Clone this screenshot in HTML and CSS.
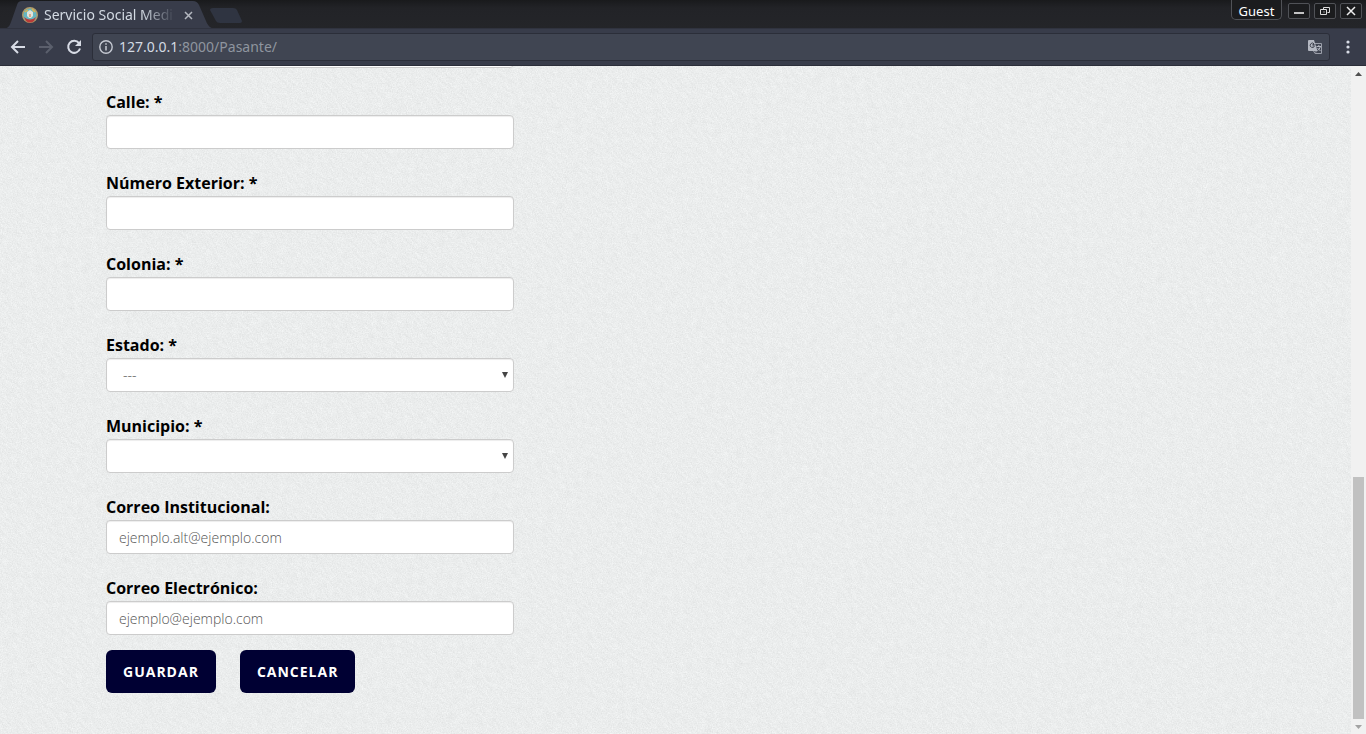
FILE: index.html
```html
<!DOCTYPE html>
<html lang="es">
<head>
<meta charset="utf-8">
<meta name="viewport" content="width=device-width, initial-scale=1">
<title>Servicio Social Medicina</title>
<link rel="stylesheet" href="styles.css">
</head>
<body>
<header class="browser">
  <div class="tabstrip">
    <svg class="tab-shape" width="244" height="28" viewBox="0 0 244 28" aria-hidden="true">
      <path d="M6 28.500C9 27 10 25 11 22L17 5Q18 1 22 1H193Q197 1 199 5L206 21Q208 27 213 28.500Z" fill="#383c4a"/>
      <path d="M213 8H233Q236 8 237 10L242 21Q242 23 240 23H220Q217 23 216 21L210 10Q210 8 213 8Z" fill="#2f3441"/>
    </svg>
    <div class="tab">
      <svg class="favicon" width="16" height="16" viewBox="0 0 16 16" aria-hidden="true">
        <circle cx="8" cy="8" r="7.300" fill="#65b5c0" stroke="#b19a69" stroke-width="1.400"/>
        <path d="M2 10Q8 15 14 10L12 14Q8 17 4 14Z" fill="#b93b38"/>
        <path d="M3 5L6 3M10 2L13 5" stroke="#e0b349" stroke-width="1.500"/>
        <path d="M8 3L11 5V9L9 11H7L5 9V5Z" fill="#dfe3da"/>
        <path d="M8 7V10" stroke="#d9a988" stroke-width="2"/>
      </svg>
      <span class="tab-title">Servicio Social Medi</span>
      <button class="icon-btn" type="button" aria-label="Cerrar pestaña"><svg width="9" height="9" viewBox="0 0 9 9"><path d="M1 1L8 8M8 1L1 8" stroke="#b4b8c0" stroke-width="1.500"/></svg></button>
    </div>
    <div class="window-controls">
      <button class="guest" type="button">Guest</button>
      <button class="win-btn" type="button" aria-label="Minimizar"><svg width="20" height="14" viewBox="0 0 20 14"><path d="M5 9H15" stroke="#eee" stroke-width="1.600"/></svg></button>
      <button class="win-btn" type="button" aria-label="Restaurar"><svg width="20" height="14" viewBox="0 0 20 14"><g fill="none" stroke="#ddd"><path d="M8.500 5.500V3.500H14.500V8.500H12.500"/><path d="M5.500 5.500H11.500V10.500H5.500Z"/><path d="M8 8H10" stroke="#888"/></g></svg></button>
      <button class="win-btn" type="button" aria-label="Cerrar"><svg width="20" height="14" viewBox="0 0 20 14"><path d="M6 3L14 11M14 3L6 11" stroke="#eee" stroke-width="1.500"/></svg></button>
    </div>
  </div>
  <div class="toolbar">
    <nav class="nav">
      <button class="icon-btn" type="button" aria-label="Atrás"><svg width="16" height="16" viewBox="0 0 16 16"><path d="M15 8H2.500M8 2L2 8L8 14" fill="none" stroke="#d8dce6" stroke-width="2"/></svg></button>
      <button class="icon-btn" type="button" aria-label="Adelante"><svg width="16" height="16" viewBox="0 0 16 16"><path d="M1 8H13.500M8 2L14 8L8 14" fill="none" stroke="#5b5f6c" stroke-width="2"/></svg></button>
      <button class="icon-btn" type="button" aria-label="Recargar"><svg width="16" height="16" viewBox="0 0 16 16"><path d="M13 4.200A6 6 0 1 0 14 9.500" fill="none" stroke="#d8dce6" stroke-width="2"/><path d="M15 1V7H9Z" fill="#d8dce6"/></svg></button>
    </nav>
    <div class="address">
      <svg width="14" height="14" viewBox="0 0 14 14" aria-hidden="true"><circle cx="7" cy="7" r="6.200" fill="none" stroke="#c5c9d2" stroke-width="1.400"/><path d="M7 6V10.500M7 3.200V4.800" stroke="#c5c9d2" stroke-width="1.500"/></svg>
      <span class="url"><span class="host">127.0.0.1</span>:8000/Pasante/</span>
      <svg class="translate" width="15" height="15" viewBox="0 0 15 15" aria-hidden="true">
        <path d="M6 3.500H13.500V13.500H7L5 10" fill="none" stroke="#9a9ea9"/>
        <path d="M0 1Q0 0 1 0H6L9.500 11H1Q0 11 0 10Z" fill="#b4b8c2"/>
        <path d="M6.500 4.500H4.500M6 3.800A2.200 2.200 0 1 0 6.500 5.800H4.500" fill="none" stroke="#414551"/>
        <path d="M8.500 6.500H13M10.800 5V6.500M12.500 6.500Q11.500 9.500 9.500 10.500M9.500 8L12.500 11" fill="none" stroke="#b4b8c2"/>
        <path d="M7 11H9.500L7.500 13.500Z" fill="#777c88"/>
      </svg>
    </div>
    <button class="icon-btn" type="button" aria-label="Menú"><svg width="4" height="14" viewBox="0 0 4 14" fill="#d8dce6"><circle cx="2" cy="2" r="1.600"/><circle cx="2" cy="7" r="1.600"/><circle cx="2" cy="12" r="1.600"/></svg></button>
  </div>
</header>
<div class="viewport">
  <main class="page">
    <form class="form">
      <div class="field"><input class="control" type="text" aria-label="Domicilio"></div>
      <div class="field"><label for="calle">Calle: *</label><input class="control" id="calle" type="text"></div>
      <div class="field"><label for="numero">Número Exterior: *</label><input class="control" id="numero" type="text"></div>
      <div class="field"><label for="colonia">Colonia: *</label><input class="control" id="colonia" type="text"></div>
      <div class="field"><label for="estado">Estado: *</label><select class="control select" id="estado"><option>---</option></select></div>
      <div class="field"><label for="municipio">Municipio: *</label><select class="control select" id="municipio"></select></div>
      <div class="field"><label for="institucional">Correo Institucional:</label><input class="control" id="institucional" type="email" placeholder="ejemplo.alt@ejemplo.com"></div>
      <div class="field"><label for="correo">Correo Electrónico:</label><input class="control" id="correo" type="email" placeholder="ejemplo@ejemplo.com"></div>
      <div class="actions">
        <button class="btn" type="submit">GUARDAR</button>
        <button class="btn" type="button">CANCELAR</button>
      </div>
    </form>
  </main>
  <div class="scrollbar" aria-hidden="true">
    <svg width="15" height="16" viewBox="0 0 15 16"><path d="M4 10L7.500 6L11 10Z" fill="#505050"/></svg>
    <div class="track"><div class="thumb"></div></div>
    <svg width="15" height="15" viewBox="0 0 15 15"><path d="M4 6L7.500 10L11 6Z" fill="#a3a3a3"/></svg>
  </div>
</div>
</body>
</html>
```
FILE: styles.css
```css
* { box-sizing: border-box; }

body {
  margin: 0;
  height: 100vh;
  display: flex;
  flex-direction: column;
  overflow: hidden;
  font-family: "Open Sans", sans-serif;
}

button { font-family: inherit; cursor: pointer; }

.browser {
  flex: none;
  font-family: "Noto Sans", sans-serif;
}

.tabstrip {
  position: relative;
  display: flex;
  justify-content: space-between;
  height: 28px;
  background: linear-gradient(#191a1c, #222327 8px, #242529);
}

.tab-shape { position: absolute; left: 0; top: 0; }

.tab {
  position: relative;
  display: flex;
  align-items: center;
  padding: 2px 0 0 22px;
}

.favicon { flex: none; }

.tab-title {
  min-width: 132px;
  margin: 0 8px 0 6px;
  white-space: nowrap;
  font-size: 14px;
  line-height: 20px;
  color: #d3dae3;
  -webkit-mask-image: linear-gradient(90deg, #000 98px, transparent 131px);
  mask-image: linear-gradient(90deg, #000 98px, transparent 131px);
}

.icon-btn {
  display: flex;
  flex: none;
  padding: 0;
  border: 0;
  background: none;
}

.window-controls {
  display: flex;
  align-items: flex-start;
  gap: 4px;
  padding-right: 4px;
}

.guest {
  width: 51px;
  height: 20px;
  margin-right: 2px;
  padding: 2px 0 0;
  border: 1px solid #505257;
  border-top: 0;
  border-radius: 0 0 5px 5px;
  background: #1b1c1e;
  color: #fff;
  font-size: 13px;
  line-height: 18px;
}

.win-btn {
  display: flex;
  width: 22px;
  height: 16px;
  margin-top: 3px;
  padding: 0;
  border: 1px solid #505257;
  border-radius: 2px;
  background: #1b1c1e;
}

.toolbar {
  display: flex;
  align-items: center;
  height: 38px;
  padding: 0 16px 0 10px;
  border-top: 1px solid #30333f;
  border-bottom: 1px solid #2b2e39;
  background: #383c4a;
}

.nav { display: flex; gap: 12px; }

.address {
  display: flex;
  flex: 1;
  align-items: center;
  height: 28px;
  margin: 0 16px 0 10px;
  padding: 0 6px;
  border: 1px solid #2b2e39;
  border-radius: 3px;
  background: #404552;
}

.url {
  flex: 1;
  margin-left: 6px;
  font-size: 14px;
  line-height: 20px;
  color: #8f959f;
}

.host { color: #d3dae3; }

.viewport {
  display: flex;
  flex: 1;
  min-height: 0;
}

.page {
  display: flex;
  flex: 1;
  flex-direction: column;
  justify-content: flex-end;
  overflow: hidden;
  padding: 0 106px 41px;
  background: #ebeded url("data:image/svg+xml,%3Csvg xmlns='http://www.w3.org/2000/svg' width='1600' height='900'%3E%3Cfilter id='a' x='0' y='0' width='100%25' height='100%25' color-interpolation-filters='sRGB'%3E%3CfeTurbulence type='fractalNoise' baseFrequency='.8' numOctaves='2'/%3E%3CfeColorMatrix values='.16 0 0 0 .842 .16 0 0 0 .85 .16 0 0 0 .85 0 0 0 0 1'/%3E%3C/filter%3E%3Cfilter id='b' x='0' y='0' width='100%25' height='100%25' color-interpolation-filters='sRGB'%3E%3CfeTurbulence type='fractalNoise' baseFrequency='.12 .4' numOctaves='1' seed='4'/%3E%3CfeColorMatrix values='.14 0 0 0 .852 .14 0 0 0 .86 .14 0 0 0 .86 0 0 0 0 1'/%3E%3C/filter%3E%3Crect width='1600' height='900' filter='url(%23a)'/%3E%3Cg opacity='.35' transform='translate(800 450) rotate(45)'%3E%3Crect x='-920' y='-920' width='1840' height='1840' filter='url(%23b)'/%3E%3C/g%3E%3C/svg%3E");
}

.form { width: 408px; max-width: 100%; }

.field {
  display: flex;
  flex-direction: column;
  margin-bottom: 25px;
}

.field label {
  margin-bottom: 4px;
  font-size: 16px;
  font-weight: 700;
  line-height: 18px;
  color: #000;
}

.control {
  width: 100%;
  height: 34px;
  padding: 6px 12px;
  border: 1px solid #ccc;
  border-radius: 4px;
  background-color: #fff;
  box-shadow: inset 0 1px 1px rgba(0, 0, 0, 0.075);
  font-family: "Open Sans", sans-serif;
  font-size: 14px;
  font-weight: 300;
  line-height: 20px;
  color: #555;
}

.control::placeholder { color: #555; opacity: 1; }

.select {
  padding-left: 16px;
  appearance: none;
  background-image: url("data:image/svg+xml,%3Csvg xmlns='http://www.w3.org/2000/svg' width='6' height='6'%3E%3Cpath d='M0 0H6L3 6Z' fill='%23444'/%3E%3C/svg%3E");
  background-repeat: no-repeat;
  background-position: right 5px center;
}

.actions {
  display: flex;
  gap: 24px;
  margin-top: -10px;
}

.btn {
  height: 43px;
  padding: 0 17px;
  border: 0;
  border-radius: 6px;
  background: #003;
  color: #fff;
  font-size: 14px;
  font-weight: 700;
  letter-spacing: 1px;
}

.scrollbar {
  display: flex;
  flex: none;
  flex-direction: column;
  width: 15px;
  background: #f1f1f1;
}

.scrollbar svg { flex: none; }

.track {
  display: flex;
  flex: 1;
  align-items: flex-end;
  padding: 0 2px;
}

.thumb {
  width: 100%;
  height: 38%;
  background: #c1c1c1;
}
```
